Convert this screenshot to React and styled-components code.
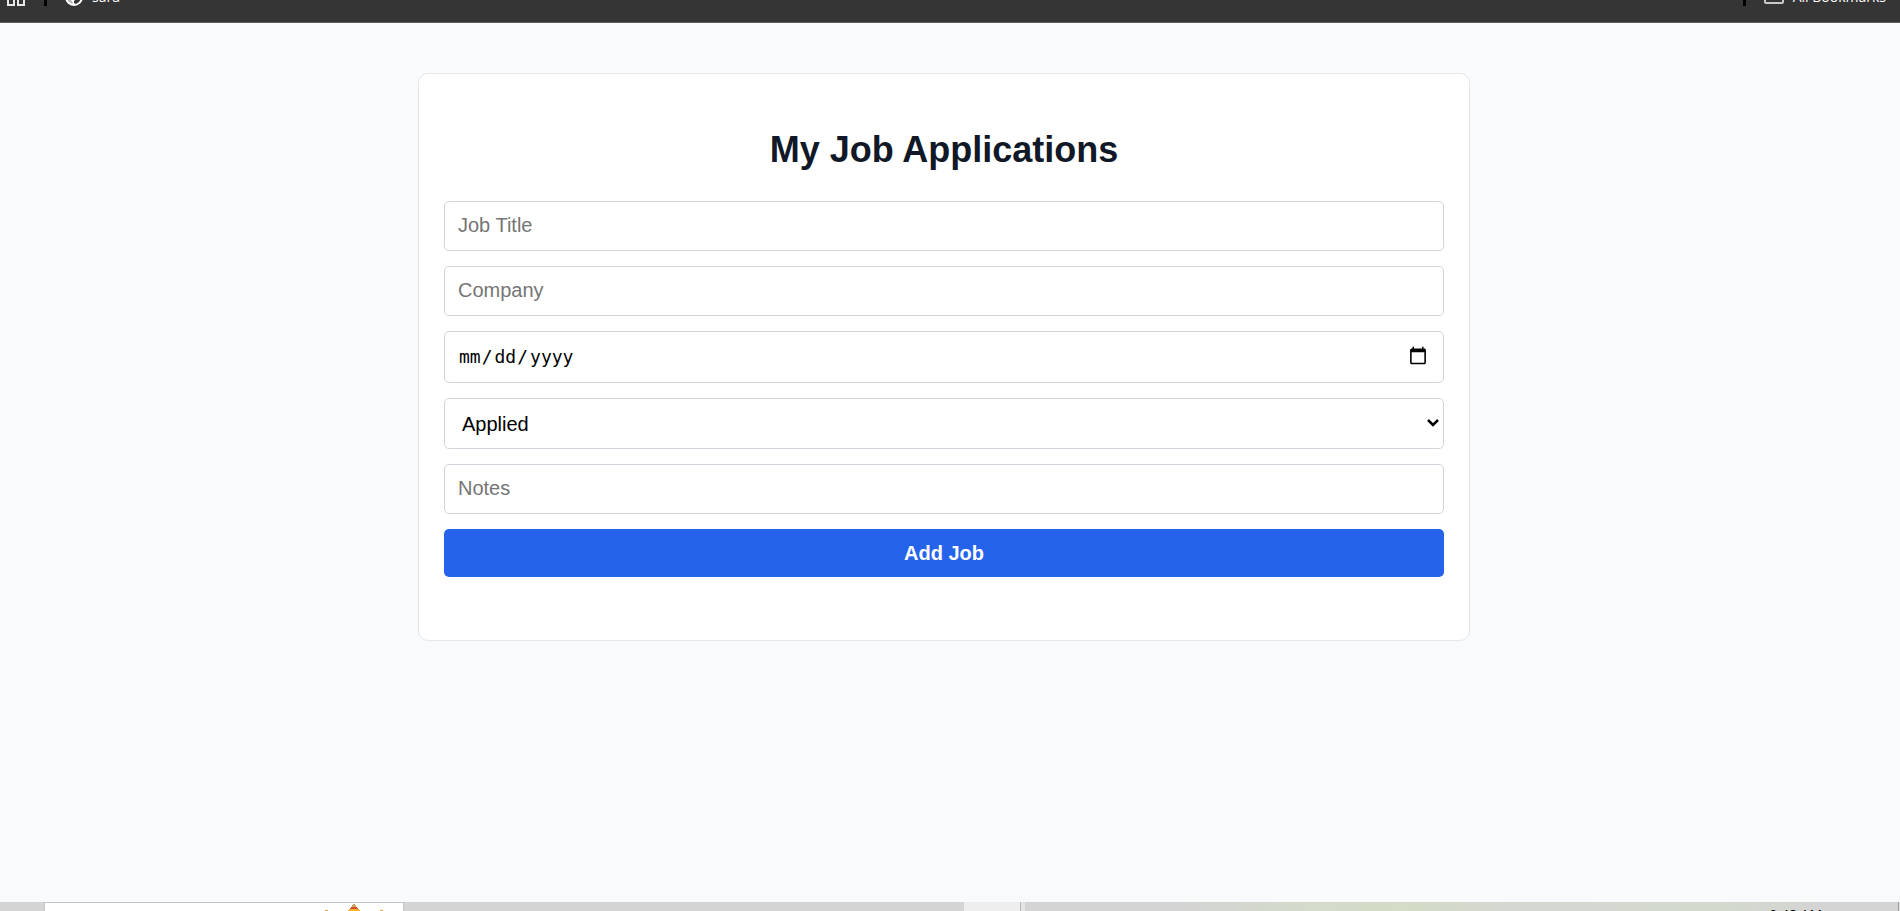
import React from "react";
import styled, { createGlobalStyle, css } from "styled-components";

const Global = createGlobalStyle`
  *, *::before, *::after { box-sizing: border-box; }
  body {
    margin: 0;
    background: #f9fafb;
    font-family: "Liberation Sans", Arial, sans-serif;
    overflow: hidden;
  }
  svg { display: block; flex: none; }
`;

const Page = styled.div`
  height: 100vh;
  display: flex;
  flex-direction: column;
  background: #f9fafc;
`;

const BookmarkBar = styled.header`
  height: 23px;
  flex: none;
  display: flex;
  justify-content: space-between;
  align-items: flex-end;
  overflow: hidden;
  padding: 0 14px 16px 7px;
  background: #353535;
  border-bottom: 1px solid #5c5e60;
  color: #fff;
`;

const BarGroup = styled.div`
  display: flex;
  align-items: flex-end;
`;

const Divider = styled.span`
  width: 3px;
  height: 20px;
  background: #000;
  margin: 0 18px 0 19px;
`;

const BookmarkLink = styled.a`
  display: flex;
  align-items: flex-end;
  gap: 9px;
  color: #fff;
  text-decoration: none;
  font: 14px/20px "Open Sans", sans-serif;
`;

const LinkText = styled.span`
  height: 19px;
`;

const IconButton = styled.button`
  display: flex;
  padding: 0;
  border: 0;
  background: none;
  color: #e8e8e8;
`;

const Main = styled.main`
  flex: 1;
  padding: 50px 12px 0 0;
`;

const Card = styled.section`
  max-width: 1052px;
  margin: 0 auto;
  padding: 25px 25px 63px;
  background: #fff;
  border: 1px solid #e5e7eb;
  border-radius: 10px;
`;

const Title = styled.h1`
  margin: 28px 0;
  font-size: 36px;
  line-height: 46px;
  font-weight: 700;
  text-align: center;
  color: #111827;
`;

const Form = styled.form`
  display: flex;
  flex-direction: column;
  gap: 15px;
`;

const field = css`
  display: block;
  width: 100%;
  height: ${(p) => p.$height || 50}px;
  padding: 11px 13px 13px;
  border: 1px solid #d1d5db;
  border-radius: 5px;
  background: #fff;
  color: #000;
  font: 20px "Liberation Sans", Arial, sans-serif;
`;

const Field = styled.input`
  ${field}
  &::placeholder { color: #757575; }
`;

const DateField = styled.input`
  ${field}
  &::-webkit-datetime-edit {
    font: 18px "DejaVu Sans Mono", monospace;
  }
  &::-webkit-datetime-edit-text {
    padding-right: 1px;
  }
`;

const SelectBox = styled.div`
  position: relative;

  svg {
    position: absolute;
    right: 5px;
    top: 21px;
    pointer-events: none;
  }
`;

const Select = styled.select`
  ${field}
  appearance: none;
  padding: 12px 17px;
`;

const SubmitButton = styled.button`
  height: 48px;
  border: 0;
  border-radius: 5px;
  background: #2563eb;
  color: #fff;
  font: 700 20px "Liberation Sans", Arial, sans-serif;
`;

const Taskbar = styled.footer`
  height: 9px;
  flex: none;
  display: flex;
  overflow: hidden;
  background: linear-gradient(90deg, #d4d4d4 0 62%, #d3dbca 69%, #d3dcc6 74%, #d5d8d1 79%, #d5d8d1 84%, #d3dacd 90%, #d4d4d4 96%);
`;

const TaskSearch = styled.div`
  width: 360px;
  flex: none;
  margin-left: 44px;
  padding-left: 280px;
  background: #fff;
  border: 1px solid #c4c4c4;
  border-bottom: 0;
`;

const ActiveTask = styled.div`
  width: 57px;
  margin-left: 560px;
  background: #eeeeee;
  border-right: 1px solid #b8b8b8;
`;

const TaskEdge = styled.div`
  width: 4px;
  background: #e4e4e4;
`;

const Clock = styled.time`
  margin-left: auto;
  padding: 3px 76px 0 0;
  font: 14px/20px "Open Sans", sans-serif;
  color: #000;
`;

const DesktopEdge = styled.div`
  width: 2px;
  background: #e0e0e0;
  border-left: 1px solid #a0a0a0;
`;

function AppsIcon() {
  return (
    <svg width="18" height="18" fill="none" stroke="currentColor" strokeWidth="2" aria-hidden="true">
      <path d="M1 1h6v6H1zM11 1h6v6h-6zM1 11h6v6H1zM11 11h6v6h-6z" />
    </svg>
  );
}

function GlobeIcon() {
  return (
    <svg width="18" height="18" aria-hidden="true">
      <circle cx="9" cy="9" r="9" fill="#fff" />
      <path d="M9 15v-2l2-2 4-1 1-2 0 3-2 3-3 2z" fill="#353535" />
      <path d="M2 11l4 1 2 3-1 1-3-2z" fill="#353535" opacity="0.35" />
    </svg>
  );
}

function FolderIcon() {
  return (
    <svg width="20" height="17" fill="none" stroke="#c9c9c9" strokeWidth="2" aria-hidden="true">
      <path d="M1 0h7l2 3h9v10q0 1-1 1H2q-1 0-1-1z" />
    </svg>
  );
}

function ChevronIcon() {
  return (
    <svg width="12" height="8" fill="none" stroke="#000" strokeWidth="2.500" aria-hidden="true">
      <path d="M1 1l5 5 5-5" />
    </svg>
  );
}

function RooftopArt() {
  return (
    <svg width="60" height="8" shapeRendering="crispEdges" aria-hidden="true">
      <path d="M28 1h2v1h1v2h-4V2h1z" fill="#c9a45c" />
      <path d="M26 4h6v1h1v1h-8V5h1z" fill="#d9482b" />
      <path d="M24 6h10v1h1v1H23V7h1z" fill="#fbb226" />
      <path d="M0 7h3v1H0zM55 7h3v1h-3z" fill="#e0a636" />
    </svg>
  );
}

export default function App() {
  return (
    <Page>
      <Global />
      <BookmarkBar>
        <BarGroup>
          <IconButton type="button" aria-label="Apps"><AppsIcon /></IconButton>
          <Divider />
          <BookmarkLink href="#"><GlobeIcon /><LinkText>sara</LinkText></BookmarkLink>
        </BarGroup>
        <BarGroup>
          <Divider />
          <BookmarkLink href="#"><FolderIcon /><LinkText>All Bookmarks</LinkText></BookmarkLink>
        </BarGroup>
      </BookmarkBar>
      <Main>
        <Card>
          <Title>My Job Applications</Title>
          <Form onSubmit={(e) => e.preventDefault()}>
            <Field type="text" placeholder="Job Title" aria-label="Job Title" />
            <Field type="text" placeholder="Company" aria-label="Company" />
            <DateField type="date" $height={52} aria-label="Application date" />
            <SelectBox>
              <Select $height={51} aria-label="Status" defaultValue="Applied">
                <option>Applied</option>
                <option>Interview</option>
                <option>Offer</option>
                <option>Rejected</option>
              </Select>
              <ChevronIcon />
            </SelectBox>
            <Field type="text" placeholder="Notes" aria-label="Notes" />
            <SubmitButton type="submit">Add Job</SubmitButton>
          </Form>
        </Card>
      </Main>
      <Taskbar>
        <TaskSearch><RooftopArt /></TaskSearch>
        <ActiveTask />
        <TaskEdge />
        <Clock>9:48 AM</Clock>
        <DesktopEdge />
      </Taskbar>
    </Page>
  );
}
